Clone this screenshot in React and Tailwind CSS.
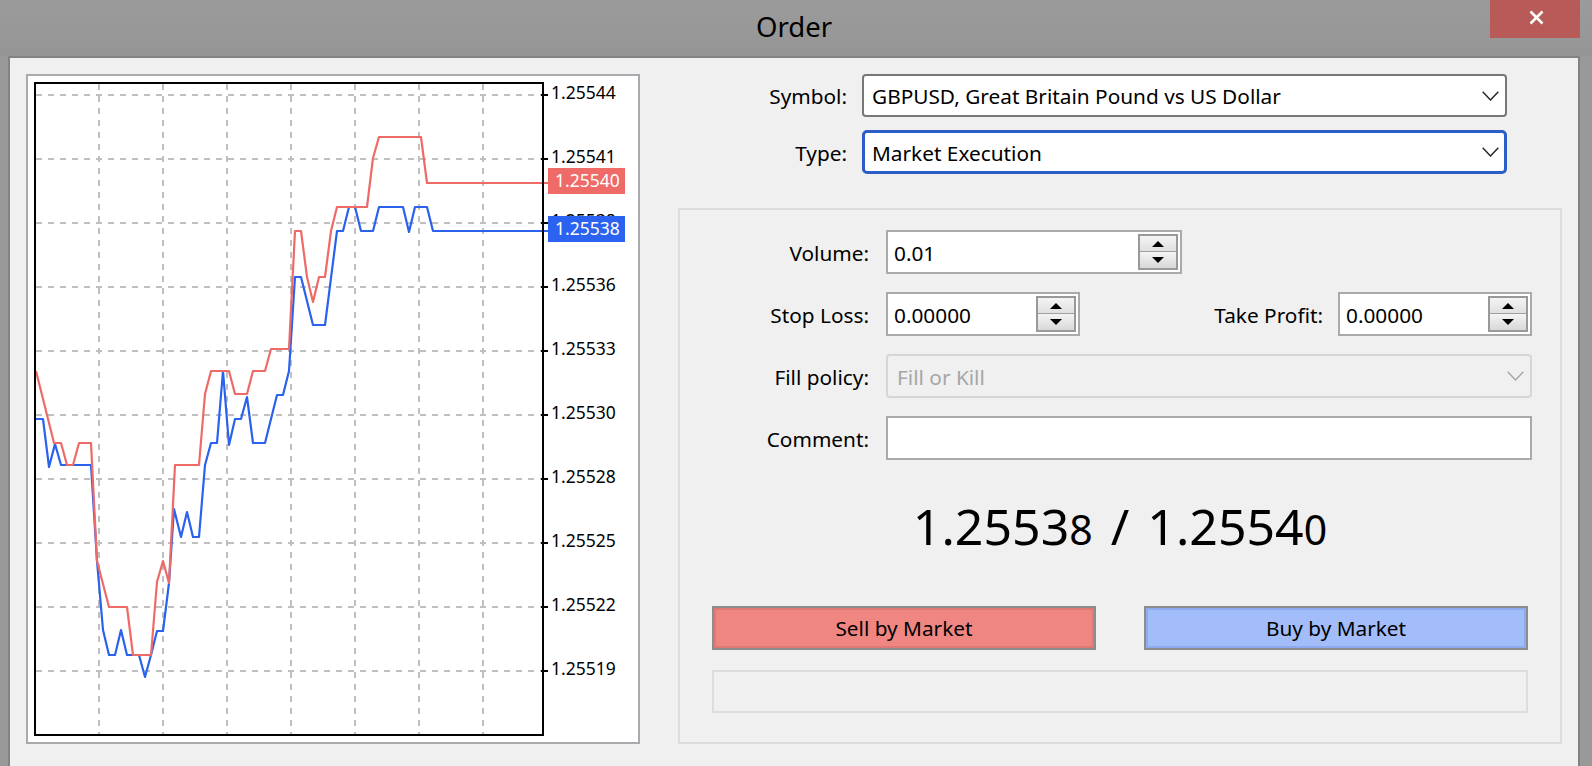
const bluePoints = "36,419 43,419 49,467 55,444 61,465 91,465 97,561 103,630 109,655 115,655 121,630 127,655 139,655 145,677 151,655 157,631 163,631 169,583 174,509 181,537 187,512 193,537 199,537 205,465 211,443 217,443 223,371 229,445 235,419 241,419 247,397 253,443 265,443 277,395 283,395 289,371 295,277 301,277 313,325 325,325 337,231 343,231 349,207 355,207 361,231 373,231 379,207 403,207 409,232 415,207 427,207 433,231 548,231";
const redPoints = "36,371 54,443 61,443 67,465 73,465 79,443 91,443 97,561 109,607 127,607 133,655 151,655 157,582 163,561 169,583 175,465 199,465 205,394 211,371 229,371 235,394 247,394 253,371 265,371 271,349 289,349 295,231 301,231 307,277 313,302 319,277 325,277 331,231 337,207 367,207 373,158 379,137 421,137 427,183 548,183";

const gridX = [99, 163, 227, 291, 355, 419, 483];
const priceLevels = [
  { y: 95, label: "1.25544" },
  { y: 159, label: "1.25541" },
  { y: 223, label: "1.25538" },
  { y: 287, label: "1.25536" },
  { y: 351, label: "1.25533" },
  { y: 415, label: "1.25530" },
  { y: 479, label: "1.25528" },
  { y: 543, label: "1.25525" },
  { y: 607, label: "1.25522" },
  { y: 671, label: "1.25519" },
];

const PriceChart = () => (
  <svg viewBox="28 76 610 666" className="w-[610px] h-[666px] block" fontFamily="'Noto Sans', sans-serif">
    {gridX.map((x) => (
      <line key={x} x1={x} y1="84" x2={x} y2="734" stroke="#c0c0c0" strokeWidth="2" strokeDasharray="6 6" />
    ))}
    {priceLevels.map((level) => (
      <line key={level.y} x1="36" y1={level.y} x2="542" y2={level.y} stroke="#c0c0c0" strokeWidth="2" strokeDasharray="6 6" />
    ))}
    <polyline points={bluePoints} fill="none" stroke="#2a62ee" strokeWidth="2.2" strokeLinejoin="round" />
    <polyline points={redPoints} fill="none" stroke="#ee6a67" strokeWidth="2.2" strokeLinejoin="round" />
    <rect x="35" y="83" width="508" height="652" fill="none" stroke="#000" strokeWidth="2" />
    {priceLevels.map((level) => (
      <g key={level.label}>
        <line x1="541" y1={level.y} x2="548" y2={level.y} stroke="#000" strokeWidth="2" />
        <text x="551" y={level.y + 4} fontSize="17.5" fill="#000">{level.label}</text>
      </g>
    ))}
    <rect x="548" y="168" width="77" height="26" fill="#ef6b68" />
    <text x="555" y="187" fontSize="17.5" fill="#fff">1.25540</text>
    <rect x="548" y="216" width="77" height="26" fill="#2b62f0" />
    <text x="555" y="235" fontSize="17.5" fill="#fff">1.25538</text>
  </svg>
);

const Chevron = ({ color = "#222" }) => (
  <svg width="17" height="10" viewBox="0 0 17 10" fill="none">
    <path d="M0.7 0.7 L8.5 9 L16.3 0.7" stroke={color} strokeWidth="1.4" />
  </svg>
);

const Spinner = () => (
  <div className="w-10 h-9 mr-[2px] border-2 border-[#999999] flex flex-col shrink-0">
    <div className="h-1/2 flex items-center justify-center bg-gradient-to-b from-[#f4f4f4] to-[#e0e0e0] border-b border-[#a0a0a0]">
      <svg width="12" height="6" viewBox="0 0 12 6"><path d="M6 0 L12 6 L0 6 Z" fill="#000" /></svg>
    </div>
    <div className="h-1/2 flex items-center justify-center bg-gradient-to-b from-[#f4f4f4] to-[#d8d8d8]">
      <svg width="12" height="6" viewBox="0 0 12 6"><path d="M0 0 L12 0 L6 6 Z" fill="#000" /></svg>
    </div>
  </div>
);

const NumberBox = ({ value, className }) => (
  <div className={`h-11 bg-white border-2 border-[#aaa9ae] flex items-center justify-between pl-[6px] ${className}`}>
    <span className="pt-[3px]">{value}</span>
    <Spinner />
  </div>
);

const App = () => {
  return (
    <div className="w-[1592px] h-[766px] overflow-hidden flex flex-col bg-[#999999] text-black text-[20.8px] font-['Noto_Sans',sans-serif]">
      <div className="h-14 shrink-0 relative flex items-center justify-center bg-gradient-to-b from-[#9b9b9b] to-[#959595]">
        <span className="text-[27.5px] leading-none pb-[2px] pr-1">Order</span>
        <button className="absolute right-3 top-0 w-[90px] h-[38px] bg-[#b85a57] flex items-center justify-center pl-[3px] pb-[4px]">
          <svg width="15" height="15" viewBox="0 0 15 15" fill="none">
            <path d="M1.5 1.5 L13.5 13.5 M13.5 1.5 L1.5 13.5" stroke="#fff" strokeWidth="2.6" />
          </svg>
        </button>
      </div>

      <div className="ml-2 w-[1572px] flex-1 border-2 border-b-0 border-[#828282] bg-[#f0f0f0] flex items-start pl-4 pt-4">
        <div className="border-2 border-[#aaa9ae] bg-white shrink-0">
          <PriceChart />
        </div>

        <div className="ml-[38px] w-[884px] flex flex-col">
          <div className="flex items-center h-[43px]">
            <span className="w-[169px] text-right pt-[3px]">Symbol:</span>
            <div className="ml-[15px] w-[645px] h-full bg-white border-2 border-[#777777] rounded-[4px] flex items-center justify-between pl-2 pr-[6px]">
              <span className="pt-[3px]">GBPUSD, Great Britain Pound vs US Dollar</span>
              <Chevron />
            </div>
          </div>
          <div className="flex items-center h-11 mt-[13px]">
            <span className="w-[169px] text-right pt-[3px]">Type:</span>
            <div className="ml-[15px] w-[645px] h-full bg-white border-[3px] border-[#2b5fc7] rounded-[5px] flex items-center justify-between pl-[7px] pr-[5px]">
              <span className="pt-[3px]">Market Execution</span>
              <Chevron />
            </div>
          </div>

          <div className="mt-[34px] h-[536px] border-2 border-[#dcdcdc] flex flex-col pt-5">
            <div className="flex items-center h-11">
              <span className="w-[189px] text-right pt-[3px]">Volume:</span>
              <NumberBox value="0.01" className="ml-[17px] w-[296px]" />
            </div>
            <div className="flex items-center h-11 mt-[18px]">
              <span className="w-[189px] text-right pt-[3px]">Stop Loss:</span>
              <NumberBox value="0.00000" className="ml-[17px] w-[194px]" />
              <span className="w-[243px] text-right pt-[3px]">Take Profit:</span>
              <NumberBox value="0.00000" className="ml-[15px] w-[194px]" />
            </div>
            <div className="flex items-center h-11 mt-[18px]">
              <span className="w-[189px] text-right pt-[3px]">Fill policy:</span>
              <div className="ml-[17px] w-[646px] h-full border-2 border-[#d6d6d6] rounded-[4px] flex items-center justify-between pl-[9px] pr-[6px] text-[#a6a6a6]">
                <span className="pt-[3px]">Fill or Kill</span>
                <Chevron color="#a6a6a6" />
              </div>
            </div>
            <div className="flex items-center h-11 mt-[18px]">
              <span className="w-[189px] text-right pt-[3px]">Comment:</span>
              <div className="ml-[17px] w-[646px] h-full bg-white border-2 border-[#aaa9ae]" />
            </div>

            <div className="h-[146px] flex items-baseline justify-center pt-[41px] leading-none text-[50px]">
              <span>1.2553</span><span className="text-[41px]">8</span>
              <span className="mx-[18px]">/</span>
              <span>1.2554</span><span className="text-[41px]">0</span>
            </div>

            <div className="px-8 flex justify-between">
              <button className="w-[384px] h-11 border-2 border-[#8c8c8c] bg-[#f08682] outline-2 -outline-offset-4 outline-[#dd7a78] pt-[2px]">Sell by Market</button>
              <button className="w-[384px] h-11 border-2 border-[#8c8c8c] bg-[#a3bcfa] outline-2 -outline-offset-4 outline-[#8faaf0] pt-[2px]">Buy by Market</button>
            </div>
            <div className="mx-8 mt-5 h-[43px] border-2 border-[#dcdcdc]" />
          </div>
        </div>
      </div>
    </div>
  );
};

export default App;
